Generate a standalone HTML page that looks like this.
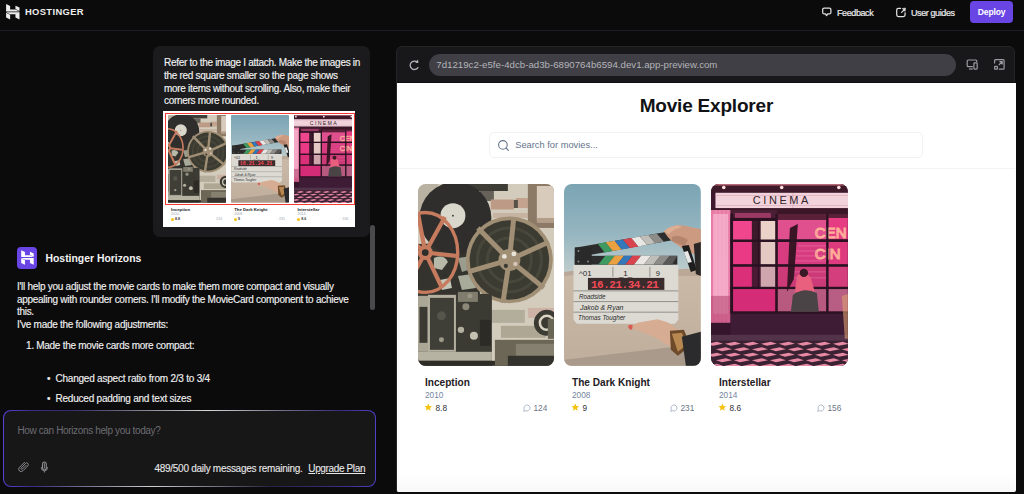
<!DOCTYPE html>
<html><head><meta charset="utf-8">
<style>
*{margin:0;padding:0;box-sizing:border-box}
html,body{width:1024px;height:494px;overflow:hidden;background:#0b0b0c;font-family:"Liberation Sans",sans-serif;position:relative}
.a{position:absolute;white-space:nowrap}
#hdrline{left:0;top:30px;width:1024px;height:1px;background:#1d1c27}
.hdr{color:#ececec;font-size:9px;letter-spacing:-0.4px;line-height:10px;-webkit-text-stroke:0.2px #ececec}
#deploy{left:970px;top:1.2px;width:43.2px;height:21.4px;background:#6a45e6;border-radius:4px;color:#fff;font-weight:700;font-size:8.6px;letter-spacing:-0.2px;text-align:center;line-height:23.2px}
#bubble{left:153.1px;top:45.8px;width:216.6px;height:191.4px;background:#1b1b1d;border-radius:7px}
.btxt{color:#f2f2f2;font-size:10px;letter-spacing:-0.3px;line-height:12.8px;-webkit-text-stroke:0.15px #f2f2f2}
#attach{left:163.4px;top:111.2px;width:191.8px;height:116.3px;background:#fff}
.ctxt{color:#f0f0f0;font-size:10px;letter-spacing:-0.27px;line-height:12.6px;-webkit-text-stroke:0.15px #f0f0f0}
#avatar{left:16.7px;top:247.3px;width:20.6px;height:21.3px;background:#6a45e6;border-radius:4px}
#thumb{left:370px;top:225px;width:5px;height:85px;background:#4a4a4c;border-radius:3px}
#input{left:3.4px;top:409.9px;width:372.2px;height:77.2px;border-radius:8px;background:linear-gradient(90deg,rgba(75,55,176,0) 18%,#d8d8dc 55%,rgba(75,55,176,0) 90%) top/100% 1.2px no-repeat,linear-gradient(90deg,rgba(75,55,176,0) 8%,#d0d0d4 40%,rgba(75,55,176,0) 72%) bottom/100% 1.2px no-repeat,linear-gradient(90deg,#5a40d8 0%,#3a2c88 8%,#25213f 35%,#25213f 70%,#3a2f8a 92%,#5040c8 100%);overflow:hidden}
#input::after{content:"";position:absolute;left:1px;top:1px;right:1px;bottom:1px;border-radius:7px;background:#171718}
#preview{left:396px;top:46.2px;width:619.4px;height:445.8px;background:#18181a;border-radius:6px 6px 2px 2px;border:1px solid #252528;overflow:hidden}
#white{left:396.8px;top:83px;width:619px;height:409px;background:#fff;border-radius:0 0 2px 2px}
#pill{left:429.3px;top:53.8px;width:526.6px;height:22px;background:#3f3f45;border-radius:11px}
.url{color:#b4b4b9;font-size:9.7px;line-height:10px}
.card{position:absolute;top:184.2px;width:136.8px;height:181.8px;border-radius:8px;overflow:hidden}
.card svg{display:block;width:100%;height:100%}
.a svg{display:block}
.ttl{color:#1f2024;font-weight:700;font-size:10.1px;line-height:11px}
.yr{color:#7485a0;font-size:8.3px;line-height:9px}
.rt{color:#303238;font-size:8.3px;line-height:9px;top:404px!important}
.cm{color:#6b7586;font-size:8.3px;line-height:9px;top:404px!important}
.mt{position:absolute;white-space:nowrap;font-size:4.3px;font-weight:700;color:#222;line-height:5px}
.my{position:absolute;white-space:nowrap;font-size:3.6px;color:#9aa3b0;line-height:4px}
.mr{position:absolute;white-space:nowrap;font-size:3.6px;color:#333;line-height:4px;font-weight:700}
.mc{position:absolute;white-space:nowrap;font-size:3.6px;color:#9aa3b0;line-height:4px;transform:translateX(-100%)}
.ms{position:absolute;width:3px;height:3px;background:#f5c211;border-radius:50%}
</style></head><body>

<!-- header -->
<div class="a" id="logo" style="left:0;top:0;width:24px;height:24px">
<svg width="24" height="24" viewBox="0 0 24 24"><g fill="#ececec" transform="translate(6.1,4.1) scale(0.396,0.364)"><path d="M0 20.07 V0 L10.15 5.5 V14.63 L23.57 14.64 L33.85 20.07 Z"/><path d="M23.64 13.67 V4.43 L33.85 9.58 V19.11 Z"/><path d="M23.64 37 V27.87 L10.15 27.86 L0 22.42 H33.85 V42 Z"/><path d="M0 36.8 V23.6 L10.15 29 V42 Z"/></g></svg>
</div>
<div class="a" id="hostinger" style="left:25px;top:6.5px;color:#ededed;font-weight:700;font-size:9.4px;letter-spacing:0.35px;line-height:10px">HOSTINGER</div>
<div class="a" id="hdrline"></div>

<div class="a" id="fbicon" style="left:822px;top:7px;width:10px;height:10px">
<svg width="10" height="10" viewBox="0 0 10 10"><path d="M2.2 1.1 H7.4 Q8.9 1.1 8.9 2.6 V5.4 Q8.9 6.9 7.4 6.9 H5.7 L4.6 8.6 L3.5 6.9 H2.2 Q0.7 6.9 0.7 5.4 V2.6 Q0.7 1.1 2.2 1.1 Z" fill="none" stroke="#e0e0e0" stroke-width="1.25" stroke-linejoin="round"/></svg>
</div>
<div class="a hdr" id="feedback" style="left:837px;top:7.6px">Feedback</div>
<div class="a" id="ugicon" style="left:896px;top:6.5px;width:11px;height:11px">
<svg width="11" height="11" viewBox="0 0 11 11"><path d="M4.6 1.3 H2.4 Q0.7 1.3 0.7 3 V7.8 Q0.7 9.5 2.4 9.5 H7.4 Q9.1 9.5 9.1 7.8 V5.8" fill="none" stroke="#e0e0e0" stroke-width="1.25" stroke-linecap="round"/><path d="M5.6 5.4 L8 3" fill="none" stroke="#e0e0e0" stroke-width="1.1" stroke-linecap="round"/><path d="M9.6 1 L6.2 1.5 L9.1 4.4 Z" fill="#e0e0e0" stroke="#e0e0e0" stroke-width="0.5" stroke-linejoin="round"/></svg>
</div>
<div class="a hdr" id="userguides" style="left:911px;top:7.6px">User guides</div>
<div class="a" id="deploy">Deploy</div>

<!-- chat -->
<div class="a" id="bubble"></div>
<div class="a btxt" id="b1" style="left:164px;top:57px">Refer to the image I attach. Make the images in</div>
<div class="a btxt" id="b2" style="left:164px;top:69.8px">the red square smaller so the page shows</div>
<div class="a btxt" id="b3" style="left:164px;top:82.6px">more items without scrolling. Also, make their</div>
<div class="a btxt" id="b4" style="left:164px;top:95.4px">corners more rounded.</div>
<div class="a" id="attach">
<div style="position:absolute;left:1.4px;top:1.5px;width:189.8px;height:92.3px;border:1.8px solid #f23b2e"></div>
<div style="position:absolute;left:4.8px;top:4px;width:57.8px;height:87.6px;overflow:hidden;border-radius:1px"><svg width="100%" height="100%" style="display:block" viewBox="0 0 137 182" preserveAspectRatio="xMidYMid slice">
<rect width="137" height="182" fill="#d3ccbc"/>
<!-- top left debris -->
<rect x="0" y="0" width="20" height="30" fill="#b9b2a2"/>
<!-- dark cabinet top -->
<rect x="50" y="0" width="40" height="7" fill="#3e3d36"/>
<rect x="62" y="7" width="14" height="10" fill="#66625a"/>
<!-- bricks top -->
<rect x="73" y="15.5" width="23" height="10" fill="#bd9a86"/>
<rect x="98" y="14" width="12" height="10" fill="#c3a28e"/>
<rect x="96" y="16" width="4" height="8" fill="#555048"/>
<rect x="75" y="29" width="35" height="5" fill="#c7b3a2"/>
<!-- wooden frame -->
<rect x="110" y="0" width="27" height="44" fill="#8c7a66"/>
<rect x="119" y="2" width="18" height="34" fill="#d8cbbb"/>
<rect x="119" y="34" width="18" height="5" fill="#b49d88"/>
<!-- dark area mid -->
<path d="M0 60 L60 58 L62 110 L0 112 Z" fill="#34332e"/>
<!-- vinyl -->
<circle cx="37.5" cy="34" r="36" fill="#2f2e2c"/>
<circle cx="35" cy="31.7" r="12.5" fill="#d9d6cc"/>
<circle cx="35" cy="31.7" r="0.9" fill="#333"/>
<!-- debris -->
<path d="M16 74 Q26 70 30 78 L24 86 L16 84 Z" fill="#b6b8a8"/>
<path d="M40 74 L54 72 L56 84 L44 88 Z" fill="#9a9c8e"/>
<path d="M40 92 L54 90 L58 104 L44 106 Z" fill="#a8aa9a"/>
<path d="M22 96 L32 94 L34 104 L24 106 Z" fill="#c3c5b6"/>
<!-- orange reel -->
<g>
<ellipse cx="7.3" cy="68.6" rx="32.5" ry="40" fill="none" stroke="#c67b5e" stroke-width="3.4"/>
<g stroke="#c67b5e" stroke-width="4.2">
<line x1="7.3" y1="68.6" x2="27" y2="33"/><line x1="7.3" y1="68.6" x2="38" y2="72"/><line x1="7.3" y1="68.6" x2="24" y2="104"/><line x1="7.3" y1="68.6" x2="-12" y2="104"/><line x1="7.3" y1="68.6" x2="-20" y2="45"/><line x1="7.3" y1="68.6" x2="0" y2="29"/>
</g>
<circle cx="7.3" cy="68.6" r="7.5" fill="#c67b5e"/>
<circle cx="7.3" cy="68.6" r="3.4" fill="#2e2d29"/>
<circle cx="27" cy="91.8" r="1.3" fill="#2e2d29"/>
</g>
<!-- beige reel -->
<g>
<circle cx="91.5" cy="76" r="43.5" fill="#a08f75"/>
<circle cx="91.5" cy="76" r="39.8" fill="#3c3b31"/>
<circle cx="91.5" cy="76" r="32" fill="none" stroke="#48473b" stroke-width="3"/>
<circle cx="91.5" cy="76" r="22" fill="none" stroke="#48473b" stroke-width="3"/>
<g stroke="#a08f75" stroke-width="5">
<line x1="91.5" y1="76" x2="96" y2="33"/><line x1="91.5" y1="76" x2="131" y2="58"/><line x1="91.5" y1="76" x2="126" y2="104"/><line x1="91.5" y1="76" x2="85" y2="119"/><line x1="91.5" y1="76" x2="50" y2="88"/><line x1="91.5" y1="76" x2="60" y2="44"/>
</g>
<circle cx="91.5" cy="76" r="11" fill="#a08f75"/>
<circle cx="86.5" cy="72.5" r="2.4" fill="#e8e4da"/><circle cx="96" cy="70" r="2.4" fill="#e8e4da"/><circle cx="97.5" cy="80" r="2.2" fill="#d9c2b8"/><circle cx="88" cy="82" r="2.1" fill="#3c3b31"/>
</g>
<!-- lower wall bricks -->
<rect x="66" y="126" width="41" height="13" fill="#b3ad9c"/>
<rect x="83" y="142" width="45" height="12" fill="#aea794"/>
<rect x="110" y="124" width="27" height="10" fill="#cdb3a5"/>
<!-- small reel right -->
<circle cx="129" cy="139" r="13" fill="#3b3a33"/>
<circle cx="129" cy="139" r="7" fill="none" stroke="#d8d3c3" stroke-width="2.5"/>
<rect x="130" y="135" width="7" height="20" fill="#6a6656"/>
<!-- projector -->
<rect x="0" y="110" width="74" height="72" fill="#3b3a33"/>
<rect x="0" y="112" width="12" height="56" fill="#aaa796"/>
<rect x="1.5" y="123" width="8" height="36" fill="#3a3a32"/>
<rect x="10" y="111" width="28" height="57" fill="#b4b0a0"/>
<rect x="12" y="114" width="24" height="52" fill="#3f3e37"/>
<circle cx="23.5" cy="132" r="4.5" fill="#56554c"/>
<circle cx="23.5" cy="156" r="2.5" fill="#9e9a8a"/>
<rect x="40" y="108" width="20" height="10" fill="#807d6e"/>
<circle cx="52" cy="112" r="2.5" fill="#9a9686"/>
<circle cx="48" cy="123" r="3.5" fill="#8c897a"/>
<circle cx="43" cy="146" r="3.2" fill="#b5b1a2"/>
<circle cx="56" cy="152" r="4" fill="#c4c0b2"/>
<rect x="62" y="136" width="11" height="26" fill="#2c2b26"/>
<rect x="0" y="168" width="74" height="9" fill="#b6b3a3"/>
<rect x="0" y="177" width="137" height="5" fill="#2d2c27"/>
<!-- bottom right machine -->
<rect x="77" y="156" width="60" height="26" fill="#6b6656"/>
<rect x="98" y="160" width="39" height="12" fill="#858070"/>
<rect x="90" y="172" width="47" height="10" fill="#34322c"/>
</svg></div>
<div style="position:absolute;left:67.9px;top:4px;width:57.6px;height:87.6px;overflow:hidden;border-radius:1px"><svg width="100%" height="100%" style="display:block" viewBox="0 0 137 182" preserveAspectRatio="xMidYMid slice">
<defs>
<linearGradient id="sky" x1="0" y1="0" x2="0" y2="1"><stop offset="0" stop-color="#7ba4b3"/><stop offset="0.55" stop-color="#96b6c1"/><stop offset="1" stop-color="#c3cfcd"/></linearGradient>
<linearGradient id="gnd" x1="0" y1="0" x2="0" y2="1"><stop offset="0" stop-color="#c9b9a6"/><stop offset="1" stop-color="#bfae9c"/></linearGradient>
</defs>
<rect width="137" height="92" fill="url(#sky)"/>
<rect y="88" width="137" height="94" fill="url(#gnd)"/>
<path d="M0 88 Q20 84 40 89 L0 92 Z" fill="#b9a89a"/>
<path d="M100 88 Q120 83 137 86 V92 H100 Z" fill="#bba896"/>
<!-- shadow -->
<path d="M0 176 L137 160 V182 H0 Z" fill="#a99a8b"/>
<!-- top stick -->
<path d="M11 70.8 L11 63.7 L115 45.9 L118 54.5 L28.6 70.7 Z" fill="#2e2d2d"/>
<path d="M33.8 59.8 L41.8 58.4 L48.8 67.1 L40.8 68.5 Z" fill="#3f9a62"/>
<path d="M41.8 58.4 L50.8 56.9 L57.8 65.5 L48.8 67.1 Z" fill="#eba141"/>
<path d="M50.8 56.9 L59.0 55.5 L66.0 64.0 L57.8 65.5 Z" fill="#3378ba"/>
<path d="M59.0 55.5 L67.5 54.0 L74.5 62.5 L66.0 64.0 Z" fill="#d9434d"/>
<path d="M67.5 54.0 L76.0 52.6 L83.0 60.9 L74.5 62.5 Z" fill="#e9e7e3"/>
<path d="M76.0 52.6 L84.5 51.1 L91.5 59.4 L83.0 60.9 Z" fill="#c0beb9"/>
<path d="M84.5 51.1 L93.0 49.7 L100.0 57.9 L91.5 59.4 Z" fill="#8d8c88"/>
<!-- bottom stick -->
<rect x="10.8" y="71.9" width="102.7" height="8.8" fill="#2e2d2d"/>
<path d="M34.4 80.7 L41.4 71.9 L50.8 71.9 L43.8 80.7 Z" fill="#3f9a62"/>
<path d="M43.8 80.7 L50.8 71.9 L60.2 71.9 L53.2 80.7 Z" fill="#eba141"/>
<path d="M53.2 80.7 L60.2 71.9 L68.4 71.9 L61.4 80.7 Z" fill="#3378ba"/>
<path d="M61.4 80.7 L68.4 71.9 L77.2 71.9 L70.2 80.7 Z" fill="#d9434d"/>
<path d="M70.2 80.7 L77.2 71.9 L87.1 71.9 L80.1 80.7 Z" fill="#e9e7e3"/>
<path d="M80.1 80.7 L87.1 71.9 L96.5 71.9 L89.5 80.7 Z" fill="#c0beb9"/>
<path d="M89.5 80.7 L96.5 71.9 L105.9 71.9 L98.9 80.7 Z" fill="#8d8c88"/>
<path d="M98.9 80.7 L105.9 71.9 L113.5 71.9 L108.3 80.7 Z" fill="#5a5957"/>
<rect x="10.8" y="63.5" width="17" height="17.2" fill="#2b2a2a"/>
<circle cx="14.5" cy="67" r="1" fill="#888"/><circle cx="14.5" cy="77.5" r="1" fill="#888"/><circle cx="24" cy="77.5" r="1" fill="#888"/>
<!-- board -->
<path d="M9.5 81.2 H114.5 V136 L111 140 H13 L9.5 136 Z" fill="#dcdad3"/>
<g fill="none" stroke="#7f7d78" stroke-width="0.8">
<line x1="9.5" y1="107" x2="114.5" y2="107"/><line x1="9.5" y1="117.7" x2="114.5" y2="117.7"/><line x1="9.5" y1="128.3" x2="114.5" y2="128.3"/>
<line x1="49" y1="83" x2="49" y2="93"/><line x1="86" y1="83" x2="86" y2="93"/>
</g>
<g font-family="Liberation Sans" font-size="6.5" fill="#2a2a2a">
<text x="15" y="92" font-size="8">^01</text><text x="55" y="92" font-size="8">_1_</text><text x="92" y="92" font-size="7.5">9</text>
<text x="15" y="115" font-size="6.3" font-style="italic">Roadside</text>
<text x="16" y="126" font-size="7" font-style="italic">Jakob &amp; Ryan</text>
<text x="14" y="136.5" font-size="6.3" font-style="italic">Thomas   Tougher</text>
</g>
<rect x="24" y="94" width="76.5" height="12" fill="#3a2c2c"/>
<text x="27" y="104.5" font-family="Liberation Mono" font-size="11" font-weight="700" fill="#f24a58" letter-spacing="-0.45">16.21.34.21</text>
<!-- upper hand -->
<path d="M100 47.5 Q104 43 112 41.5 Q120 40.5 126 43 L137 45 V72 L130 70 Q122 68 118 64 L112 60 Q107 57 104 53 Z" fill="#cc9a80"/>
<path d="M100 47.5 Q104 43 112 41.5 Q116 41 118 43 Q110 45 105 50 Z" fill="#dcae94"/>
<path d="M108 53 Q116 50 124 56 L121 62 Q114 60 108 57 Z" fill="#b5846c"/>
<path d="M118 62 L125 61 L133 86 L127 88 Z" fill="#1f1e1e"/>
<path d="M120 68 L124 67 L128 78 L124 79 Z" fill="#e8e8e8"/>
<path d="M130 60 L137 58 V92 L132 90 Z" fill="#2a2726"/>
<!-- lower hand -->
<path d="M65.3 142.8 L74.8 138.7 L93.6 135.3 L104.4 138.7 L115.2 146.8 L120.6 153.5 L115.2 164.3 L104.4 161.6 L90.9 153.5 L74.8 146.8 Z" fill="#d6ad93"/>
<path d="M64.5 141.5 Q67 140 69 142 L68 146 Q65 146 64.5 144 Z" fill="#d85a50"/>
<path d="M106 147 L120 146 L127 162 L114 172 L107 166 Z" fill="#6d4a2a"/>
<path d="M108 150 L118 149 L123 161 L114 168 Z" fill="#b78852"/>
<path d="M118 153 L137 148 V182 H122 Z" fill="#2b2a2c"/>
</svg></div>
<div style="position:absolute;left:131px;top:4px;width:57.4px;height:87.6px;overflow:hidden;border-radius:1px"><svg width="100%" height="100%" style="display:block" viewBox="0 0 137 182" preserveAspectRatio="xMidYMid slice">
<rect width="137" height="182" fill="#40192f"/>
<!-- top bar -->
<rect width="137" height="9" fill="#3e1a2a"/>
<rect width="137" height="1.5" fill="#b86a78"/>
<circle cx="12.8" cy="3.5" r="1.8" fill="#ffe0e0"/><circle cx="70.8" cy="3.5" r="1.8" fill="#ffe0e0"/><circle cx="128" cy="3.5" r="1.8" fill="#ffe0e0"/>
<!-- marquee -->
<rect x="4.5" y="8.8" width="133" height="15.5" fill="#f2d3dc"/>
<g stroke="#dcaab8" stroke-width="0.7"><line x1="4.5" y1="11.5" x2="137" y2="11.5"/><line x1="4.5" y1="21.5" x2="137" y2="21.5"/></g>
<line x1="82" y1="8.8" x2="82" y2="24.3" stroke="#c89aa8" stroke-width="0.5"/>
<text x="71" y="20.3" text-anchor="middle" font-family="Liberation Sans" font-size="11" letter-spacing="2.6" fill="#33242c">CINEMA</text>
<rect x="0" y="24.3" width="137" height="6" fill="#3a1626"/>
<!-- left tiled wall -->
<rect x="0" y="26" width="19.5" height="113" fill="#e87aa6"/>
<rect x="2" y="30" width="15" height="100" fill="#f4a6c4"/>
<g stroke="#fbd0de" stroke-width="0.35" opacity="0.9">
<line x1="5" y1="26" x2="5" y2="139"/><line x1="9" y1="26" x2="9" y2="139"/><line x1="13" y1="26" x2="13" y2="139"/><line x1="17" y1="26" x2="17" y2="139"/>
</g>
<rect x="0" y="112" width="19.5" height="27" fill="#b84a74" opacity="0.6"/>
<!-- overhang -->
<path d="M19.5 26 H66 V37 H26 Z" fill="#4a1f35"/>
<rect x="24" y="29" width="36" height="5" fill="#9a3a62"/>
<!-- window area -->
<rect x="19.5" y="34" width="117.5" height="95" fill="#2a1020"/>
<rect x="21.5" y="37" width="19.5" height="19" fill="#f0468e"/>
<rect x="49.5" y="37" width="15" height="19" fill="#ead2c8"/><rect x="41" y="37" width="8.5" height="19" fill="#3c1a2c"/>
<rect x="21.5" y="58" width="19.5" height="22.5" fill="#ea3a86"/>
<rect x="49.5" y="58" width="15" height="22.5" fill="#e4c9c2"/><rect x="41" y="58" width="8.5" height="22.5" fill="#3c1a2c"/>
<rect x="21.5" y="82.5" width="19.5" height="20.5" fill="#dc2f7a"/>
<rect x="49.5" y="82.5" width="15" height="20.5" fill="#cfa6ae"/><rect x="41" y="82.5" width="8.5" height="20.5" fill="#4a1a34"/>
<rect x="21.5" y="105" width="43" height="23" fill="#d42c76"/>
<rect x="66.5" y="34" width="49" height="21.5" fill="#e0508e"/>
<rect x="66.5" y="30" width="70.5" height="6" fill="#5a2038"/>
<rect x="66.5" y="58" width="49" height="22.5" fill="#d83c80"/>
<rect x="66.5" y="82.5" width="49" height="20.5" fill="#cc3a78"/>
<rect x="66.5" y="105" width="49" height="23" fill="#b85a80"/>
<rect x="117.5" y="34" width="19.5" height="21.5" fill="#e63c82"/>
<rect x="117.5" y="58" width="19.5" height="22.5" fill="#de3a7e"/>
<rect x="117.5" y="82.5" width="19.5" height="20.5" fill="#d43e7c"/>
<rect x="117.5" y="105" width="19.5" height="23" fill="#b85e84"/>
<!-- stairs -->
<path d="M79 44 L87 40 L83 95 L76 108 Z" fill="#3a1525"/>
<g stroke="#ff9ab8" stroke-width="0.6" opacity="0.6"><line x1="87" y1="62" x2="115" y2="62"/><line x1="86" y1="67" x2="115" y2="67"/><line x1="85" y1="72" x2="115" y2="72"/><line x1="84" y1="77" x2="115" y2="77"/><line x1="84" y1="88" x2="115" y2="88"/><line x1="83" y1="94" x2="115" y2="94"/></g>
<!-- neon -->
<text x="104" y="54" font-family="Liberation Sans" font-size="15" fill="none" stroke="#ffb09a" stroke-width="1.1">CEN</text>
<text x="104" y="75" font-family="Liberation Sans" font-size="15" fill="none" stroke="#ffb09a" stroke-width="1.1">CIN</text>
<!-- mullions -->
<g fill="#2a1222">
<rect x="19.5" y="30" width="2.6" height="100"/>
<rect x="47" y="34" width="1.2" height="70"/>
<rect x="64.6" y="30" width="2.2" height="100"/>
<rect x="115.5" y="30" width="2" height="100"/>
<rect x="19.5" y="55.6" width="117.5" height="2.2"/>
<rect x="19.5" y="80.5" width="117.5" height="2.2"/>
<rect x="19.5" y="103" width="117.5" height="2.2"/>
<rect x="19.5" y="127.5" width="117.5" height="2.5"/>
</g>
<!-- person -->
<path d="M86 92 Q94 86 100 94 L104 108 L84 108 Z" fill="#e8607e"/>
<circle cx="93" cy="89" r="4.2" fill="#3a1a24"/>
<path d="M82 111 Q93 103 106 109 L108 128 H80 Z" fill="#4a4446"/>
<!-- lower wall -->
<rect x="19.5" y="130" width="117.5" height="22" fill="#3f1c36"/>
<rect x="0" y="139" width="19.5" height="13" fill="#35152c"/>
<rect x="0" y="151" width="137" height="6" fill="#53334a"/>
<!-- floor -->
<rect x="0" y="157" width="137" height="25" fill="#3a2232"/>
<g fill="#e889a5">
<path d="M-4 160 L6 158 L12 160 L2 162 Z"/><path d="M14 160 L24 158 L30 160 L20 162 Z"/><path d="M32 160 L42 158 L48 160 L38 162 Z"/><path d="M50 160 L60 158 L66 160 L56 162 Z"/><path d="M68 160 L78 158 L84 160 L74 162 Z"/><path d="M86 160 L96 158 L102 160 L92 162 Z"/><path d="M104 160 L114 158 L120 160 L110 162 Z"/><path d="M122 160 L132 158 L138 160 L128 162 Z"/>
<path d="M5 165.5 L15 163.5 L21 165.5 L11 167.5 Z"/><path d="M23 165.5 L33 163.5 L39 165.5 L29 167.5 Z"/><path d="M41 165.5 L51 163.5 L57 165.5 L47 167.5 Z"/><path d="M59 165.5 L69 163.5 L75 165.5 L65 167.5 Z"/><path d="M77 165.5 L87 163.5 L93 165.5 L83 167.5 Z"/><path d="M95 165.5 L105 163.5 L111 165.5 L101 167.5 Z"/><path d="M113 165.5 L123 163.5 L129 165.5 L119 167.5 Z"/><path d="M131 165.5 L141 163.5 L147 165.5 L137 167.5 Z"/>
<path d="M-4 171 L6 169 L12 171 L2 173 Z"/><path d="M14 171 L24 169 L30 171 L20 173 Z"/><path d="M32 171 L42 169 L48 171 L38 173 Z"/><path d="M50 171 L60 169 L66 171 L56 173 Z"/><path d="M68 171 L78 169 L84 171 L74 173 Z"/><path d="M86 171 L96 169 L102 171 L92 173 Z"/><path d="M104 171 L114 169 L120 171 L110 173 Z"/><path d="M122 171 L132 169 L138 171 L128 173 Z"/>
<path d="M5 176.5 L15 174.5 L21 176.5 L11 178.5 Z"/><path d="M23 176.5 L33 174.5 L39 176.5 L29 178.5 Z"/><path d="M41 176.5 L51 174.5 L57 176.5 L47 178.5 Z"/><path d="M59 176.5 L69 174.5 L75 176.5 L65 178.5 Z"/><path d="M77 176.5 L87 174.5 L93 176.5 L83 178.5 Z"/><path d="M95 176.5 L105 174.5 L111 176.5 L101 178.5 Z"/><path d="M113 176.5 L123 174.5 L129 176.5 L119 178.5 Z"/><path d="M131 176.5 L141 174.5 L147 176.5 L137 178.5 Z"/>
<path d="M-4 182 L6 180 L12 182 L2 184 Z"/><path d="M14 182 L24 180 L30 182 L20 184 Z"/><path d="M32 182 L42 180 L48 182 L38 184 Z"/><path d="M50 182 L60 180 L66 182 L56 184 Z"/><path d="M68 182 L78 180 L84 182 L74 184 Z"/><path d="M86 182 L96 180 L102 182 L92 184 Z"/><path d="M104 182 L114 180 L120 182 L110 184 Z"/><path d="M122 182 L132 180 L138 182 L128 184 Z"/>
</g>
<!-- right chair -->
<path d="M131 112 L137 110 V155 L134 155 Z" fill="#d9a070" opacity="0.6"/>
</svg></div>
<div class="mt" style="left:7.6px;top:95.5px">Inception</div>
<div class="my" style="left:7.6px;top:100.5px">2010</div>
<div class="ms" style="left:7.6px;top:106.5px"></div><div class="mr" style="left:11.5px;top:106px">8.8</div><div class="mc" style="left:58.5px;top:106px">◌ 124</div>
<div class="mt" style="left:70.8px;top:95.5px">The Dark Knight</div>
<div class="my" style="left:70.8px;top:100.5px">2008</div>
<div class="ms" style="left:70.8px;top:106.5px"></div><div class="mr" style="left:74.7px;top:106px">9</div><div class="mc" style="left:121.7px;top:106px">◌ 231</div>
<div class="mt" style="left:134px;top:95.5px">Interstellar</div>
<div class="my" style="left:134px;top:100.5px">2014</div>
<div class="ms" style="left:134px;top:106.5px"></div><div class="mr" style="left:137.9px;top:106px">8.6</div><div class="mc" style="left:184.9px;top:106px;transform:translateX(-100%)">◌ 156</div>
</div>

<div class="a" id="avatar"><svg width="21" height="21" viewBox="0 0 21 21" style="position:absolute;left:0;top:0"><g fill="#fff" transform="translate(4.2,3.2) scale(0.37,0.345)"><path d="M0 20.07 V0 L10.15 5.5 V14.63 L23.57 14.64 L33.85 20.07 Z"/><path d="M23.64 13.67 V4.43 L33.85 9.58 V19.11 Z"/><path d="M23.64 37 V27.87 L10.15 27.86 L0 22.42 H33.85 V42 Z"/><path d="M0 36.8 V23.6 L10.15 29 V42 Z"/></g></svg></div>
<div class="a" id="hname" style="left:45.5px;top:253px;color:#f2f2f2;font-weight:700;font-size:10.4px;line-height:11px">Hostinger Horizons</div>
<div class="a ctxt" id="c1" style="left:16.9px;top:280.5px">I'll help you adjust the movie cards to make them more compact and visually</div>
<div class="a ctxt" id="c2" style="left:16.9px;top:293.5px">appealing with rounder corners. I'll modify the MovieCard component to achieve</div>
<div class="a ctxt" id="c3" style="left:16.9px;top:305.7px">this.</div>
<div class="a ctxt" id="c4" style="left:16.9px;top:318.8px">I've made the following adjustments:</div>
<div class="a ctxt" id="c5" style="left:26.1px;top:339.7px">1.</div>
<div class="a ctxt" id="c6" style="left:36.2px;top:339.7px">Made the movie cards more compact:</div>
<div class="a ctxt" id="c7" style="left:47px;top:372.5px">•</div>
<div class="a ctxt" id="c8" style="left:55.5px;top:372.5px;font-size:10px;letter-spacing:-0.22px">Changed aspect ratio from 2/3 to 3/4</div>
<div class="a ctxt" id="c9" style="left:47px;top:392.9px">•</div>
<div class="a ctxt" id="c10" style="left:55.5px;top:392.9px;font-size:10px;letter-spacing:-0.22px">Reduced padding and text sizes</div>
<div class="a" id="thumb"></div>

<div class="a" id="input"></div>
<div class="a" id="ph" style="left:17.4px;top:426px;color:#6c6c72;font-size:10px;letter-spacing:-0.36px;line-height:10px">How can Horizons help you today?</div>
<div class="a" id="rem" style="left:154.5px;top:463.5px;color:#e8e8e8;font-size:10px;letter-spacing:-0.28px;line-height:10px;-webkit-text-stroke:0.1px #e8e8e8">489/500 daily messages remaining.</div>
<div class="a" id="upg" style="left:308.3px;top:463.5px;color:#e8e8e8;font-size:10px;letter-spacing:-0.36px;line-height:10px;text-decoration:underline;-webkit-text-stroke:0.1px #e8e8e8">Upgrade Plan</div>

<!-- preview -->
<div class="a" id="preview"></div>
<div class="a" id="pill"></div>
<div class="a url" id="url" style="left:436.3px;top:60px">7d1219c2-e5fe-4dcb-ad3b-6890764b6594.dev1.app-preview.com</div>
<div class="a" id="tbline" style="left:396.5px;top:81.5px;width:618.5px;height:1.5px;background:#0f0f11"></div>
<div class="a" id="white"></div>

<div class="a" id="reload" style="left:402px;top:54px;width:26px;height:22px"><svg width="26" height="22" viewBox="0 0 26 22"><path d="M15.2 8.2 A4.2 4.2 0 1 0 15.9 13.6" fill="none" stroke="#b4b4b9" stroke-width="1.3" stroke-linecap="round"/><path d="M13.2 8.6 L16.4 8.9 L16 5.6 Z" fill="#b4b4b9"/></svg></div>
<div class="a" id="devices" style="left:960px;top:52px;width:26px;height:22px"><svg width="26" height="22" viewBox="0 0 26 22"><path d="M12.8 14.7 H8.2 Q7.2 14.7 7.2 13.7 V9 Q7.2 8 8.2 8 H15.8 Q16.8 8 16.8 9 V10" fill="none" stroke="#9c9ca2" stroke-width="1.2"/><path d="M9 17 H12.8" stroke="#9c9ca2" stroke-width="1.2"/><rect x="13.9" y="10.9" width="3.3" height="6.2" rx="0.8" fill="none" stroke="#9c9ca2" stroke-width="1.2"/></svg></div>
<div class="a" id="expand" style="left:988px;top:52px;width:24px;height:22px"><svg width="24" height="22" viewBox="0 0 24 22"><path d="M6.6 11.5 V8.5 Q6.6 7.6 7.5 7.6 H15.2 Q16.1 7.6 16.1 8.5 V16.3 Q16.1 17.2 15.2 17.2 H10.8" fill="none" stroke="#9c9ca2" stroke-width="1.2"/><rect x="6.6" y="14.4" width="2.8" height="2.8" rx="0.5" fill="none" stroke="#9c9ca2" stroke-width="1.2"/><path d="M10.8 13 L14 9.8 M11.4 9.6 H14.2 V12.4" fill="none" stroke="#9c9ca2" stroke-width="1.2"/></svg></div>
<div class="a" id="sicon" style="left:490px;top:134px;width:30px;height:22px"><svg width="30" height="22" viewBox="0 0 30 22"><circle cx="12.9" cy="10.9" r="4.3" fill="none" stroke="#64748b" stroke-width="1.1"/><path d="M16 14 L18.4 16.4" stroke="#64748b" stroke-width="1.1" stroke-linecap="round"/></svg></div>
<div class="a" id="clip" style="left:14px;top:456px;width:40px;height:22px"><svg width="40" height="22" viewBox="0 0 40 22"><path transform="translate(4.1,5.5) scale(0.82) translate(-4.7,-5.1)" d="M12.6 6 L6.4 12.2 Q4.2 14.6 6.3 16.6 Q8.5 18.6 10.9 16.2 L16.4 10.6 Q18 8.8 16.6 7.4 Q15.2 6 13.5 7.7 L8.6 12.8 Q7.8 13.8 8.5 14.4 Q9.2 15 10.1 14.1 L14.4 9.8" fill="none" stroke="#8c8c91" stroke-width="1.2" stroke-linecap="round"/><path d="M30.4 6 Q32.3 6 32.3 8.6 V11.5 Q32.3 14 30.4 14 Q28.5 14 28.5 11.5 V8.6 Q28.5 6 30.4 6 Z" fill="none" stroke="#8c8c91" stroke-width="1.1"/><path d="M30.4 7.2 V12.5" stroke="#8c8c91" stroke-width="0.9"/><path d="M27.2 11 Q27.4 15 30.4 15 Q33.4 15 33.6 11" fill="none" stroke="#8c8c91" stroke-width="0.9"/><path d="M30.4 15 V16.5" stroke="#8c8c91" stroke-width="1"/></svg></div>

<div class="a" id="wfade" style="left:396.8px;top:474px;width:618.7px;height:18px;background:linear-gradient(rgba(248,248,248,0),#f7f7f7);border-radius:0 0 2px 2px"></div>
<div class="a" id="mtitle" style="left:639.7px;top:96px;color:#111216;font-weight:700;font-size:19px;letter-spacing:-0.2px;line-height:20px">Movie Explorer</div>
<div class="a" id="search" style="left:488.8px;top:132px;width:434px;height:26px;border:1px solid #f1f2f5;border-radius:5px"></div>
<div class="a" id="stxt" style="left:515.2px;top:140px;color:#64748b;font-size:9.3px;line-height:10px">Search for movies...</div>
<div class="a" id="divider" style="left:397px;top:168px;width:618px;height:1px;background:#f3f4f6"></div>

<div class="card" id="card1" style="left:417.6px"><svg viewBox="0 0 137 182" preserveAspectRatio="xMidYMid slice">
<rect width="137" height="182" fill="#d3ccbc"/>
<!-- top left debris -->
<rect x="0" y="0" width="20" height="30" fill="#b9b2a2"/>
<!-- dark cabinet top -->
<rect x="50" y="0" width="40" height="7" fill="#3e3d36"/>
<rect x="62" y="7" width="14" height="10" fill="#66625a"/>
<!-- bricks top -->
<rect x="73" y="15.5" width="23" height="10" fill="#bd9a86"/>
<rect x="98" y="14" width="12" height="10" fill="#c3a28e"/>
<rect x="96" y="16" width="4" height="8" fill="#555048"/>
<rect x="75" y="29" width="35" height="5" fill="#c7b3a2"/>
<!-- wooden frame -->
<rect x="110" y="0" width="27" height="44" fill="#8c7a66"/>
<rect x="119" y="2" width="18" height="34" fill="#d8cbbb"/>
<rect x="119" y="34" width="18" height="5" fill="#b49d88"/>
<!-- dark area mid -->
<path d="M0 60 L60 58 L62 110 L0 112 Z" fill="#34332e"/>
<!-- vinyl -->
<circle cx="37.5" cy="34" r="36" fill="#2f2e2c"/>
<circle cx="35" cy="31.7" r="12.5" fill="#d9d6cc"/>
<circle cx="35" cy="31.7" r="0.9" fill="#333"/>
<!-- debris -->
<path d="M16 74 Q26 70 30 78 L24 86 L16 84 Z" fill="#b6b8a8"/>
<path d="M40 74 L54 72 L56 84 L44 88 Z" fill="#9a9c8e"/>
<path d="M40 92 L54 90 L58 104 L44 106 Z" fill="#a8aa9a"/>
<path d="M22 96 L32 94 L34 104 L24 106 Z" fill="#c3c5b6"/>
<!-- orange reel -->
<g>
<ellipse cx="7.3" cy="68.6" rx="32.5" ry="40" fill="none" stroke="#c67b5e" stroke-width="3.4"/>
<g stroke="#c67b5e" stroke-width="4.2">
<line x1="7.3" y1="68.6" x2="27" y2="33"/><line x1="7.3" y1="68.6" x2="38" y2="72"/><line x1="7.3" y1="68.6" x2="24" y2="104"/><line x1="7.3" y1="68.6" x2="-12" y2="104"/><line x1="7.3" y1="68.6" x2="-20" y2="45"/><line x1="7.3" y1="68.6" x2="0" y2="29"/>
</g>
<circle cx="7.3" cy="68.6" r="7.5" fill="#c67b5e"/>
<circle cx="7.3" cy="68.6" r="3.4" fill="#2e2d29"/>
<circle cx="27" cy="91.8" r="1.3" fill="#2e2d29"/>
</g>
<!-- beige reel -->
<g>
<circle cx="91.5" cy="76" r="43.5" fill="#a08f75"/>
<circle cx="91.5" cy="76" r="39.8" fill="#3c3b31"/>
<circle cx="91.5" cy="76" r="32" fill="none" stroke="#48473b" stroke-width="3"/>
<circle cx="91.5" cy="76" r="22" fill="none" stroke="#48473b" stroke-width="3"/>
<g stroke="#a08f75" stroke-width="5">
<line x1="91.5" y1="76" x2="96" y2="33"/><line x1="91.5" y1="76" x2="131" y2="58"/><line x1="91.5" y1="76" x2="126" y2="104"/><line x1="91.5" y1="76" x2="85" y2="119"/><line x1="91.5" y1="76" x2="50" y2="88"/><line x1="91.5" y1="76" x2="60" y2="44"/>
</g>
<circle cx="91.5" cy="76" r="11" fill="#a08f75"/>
<circle cx="86.5" cy="72.5" r="2.4" fill="#e8e4da"/><circle cx="96" cy="70" r="2.4" fill="#e8e4da"/><circle cx="97.5" cy="80" r="2.2" fill="#d9c2b8"/><circle cx="88" cy="82" r="2.1" fill="#3c3b31"/>
</g>
<!-- lower wall bricks -->
<rect x="66" y="126" width="41" height="13" fill="#b3ad9c"/>
<rect x="83" y="142" width="45" height="12" fill="#aea794"/>
<rect x="110" y="124" width="27" height="10" fill="#cdb3a5"/>
<!-- small reel right -->
<circle cx="129" cy="139" r="13" fill="#3b3a33"/>
<circle cx="129" cy="139" r="7" fill="none" stroke="#d8d3c3" stroke-width="2.5"/>
<rect x="130" y="135" width="7" height="20" fill="#6a6656"/>
<!-- projector -->
<rect x="0" y="110" width="74" height="72" fill="#3b3a33"/>
<rect x="0" y="112" width="12" height="56" fill="#aaa796"/>
<rect x="1.5" y="123" width="8" height="36" fill="#3a3a32"/>
<rect x="10" y="111" width="28" height="57" fill="#b4b0a0"/>
<rect x="12" y="114" width="24" height="52" fill="#3f3e37"/>
<circle cx="23.5" cy="132" r="4.5" fill="#56554c"/>
<circle cx="23.5" cy="156" r="2.5" fill="#9e9a8a"/>
<rect x="40" y="108" width="20" height="10" fill="#807d6e"/>
<circle cx="52" cy="112" r="2.5" fill="#9a9686"/>
<circle cx="48" cy="123" r="3.5" fill="#8c897a"/>
<circle cx="43" cy="146" r="3.2" fill="#b5b1a2"/>
<circle cx="56" cy="152" r="4" fill="#c4c0b2"/>
<rect x="62" y="136" width="11" height="26" fill="#2c2b26"/>
<rect x="0" y="168" width="74" height="9" fill="#b6b3a3"/>
<rect x="0" y="177" width="137" height="5" fill="#2d2c27"/>
<!-- bottom right machine -->
<rect x="77" y="156" width="60" height="26" fill="#6b6656"/>
<rect x="98" y="160" width="39" height="12" fill="#858070"/>
<rect x="90" y="172" width="47" height="10" fill="#34322c"/>
</svg></div>
<div class="card" id="card2" style="left:564px"><svg viewBox="0 0 137 182" preserveAspectRatio="xMidYMid slice">
<defs>
<linearGradient id="sky1" x1="0" y1="0" x2="0" y2="1"><stop offset="0" stop-color="#7ba4b3"/><stop offset="0.55" stop-color="#96b6c1"/><stop offset="1" stop-color="#c3cfcd"/></linearGradient>
<linearGradient id="gnd1" x1="0" y1="0" x2="0" y2="1"><stop offset="0" stop-color="#c9b9a6"/><stop offset="1" stop-color="#bfae9c"/></linearGradient>
</defs>
<rect width="137" height="92" fill="url(#sky1)"/>
<rect y="88" width="137" height="94" fill="url(#gnd1)"/>
<path d="M0 88 Q20 84 40 89 L0 92 Z" fill="#b9a89a"/>
<path d="M100 88 Q120 83 137 86 V92 H100 Z" fill="#bba896"/>
<!-- shadow -->
<path d="M0 176 L137 160 V182 H0 Z" fill="#a99a8b"/>
<!-- top stick -->
<path d="M11 70.8 L11 63.7 L115 45.9 L118 54.5 L28.6 70.7 Z" fill="#2e2d2d"/>
<path d="M33.8 59.8 L41.8 58.4 L48.8 67.1 L40.8 68.5 Z" fill="#3f9a62"/>
<path d="M41.8 58.4 L50.8 56.9 L57.8 65.5 L48.8 67.1 Z" fill="#eba141"/>
<path d="M50.8 56.9 L59.0 55.5 L66.0 64.0 L57.8 65.5 Z" fill="#3378ba"/>
<path d="M59.0 55.5 L67.5 54.0 L74.5 62.5 L66.0 64.0 Z" fill="#d9434d"/>
<path d="M67.5 54.0 L76.0 52.6 L83.0 60.9 L74.5 62.5 Z" fill="#e9e7e3"/>
<path d="M76.0 52.6 L84.5 51.1 L91.5 59.4 L83.0 60.9 Z" fill="#c0beb9"/>
<path d="M84.5 51.1 L93.0 49.7 L100.0 57.9 L91.5 59.4 Z" fill="#8d8c88"/>
<!-- bottom stick -->
<rect x="10.8" y="71.9" width="102.7" height="8.8" fill="#2e2d2d"/>
<path d="M34.4 80.7 L41.4 71.9 L50.8 71.9 L43.8 80.7 Z" fill="#3f9a62"/>
<path d="M43.8 80.7 L50.8 71.9 L60.2 71.9 L53.2 80.7 Z" fill="#eba141"/>
<path d="M53.2 80.7 L60.2 71.9 L68.4 71.9 L61.4 80.7 Z" fill="#3378ba"/>
<path d="M61.4 80.7 L68.4 71.9 L77.2 71.9 L70.2 80.7 Z" fill="#d9434d"/>
<path d="M70.2 80.7 L77.2 71.9 L87.1 71.9 L80.1 80.7 Z" fill="#e9e7e3"/>
<path d="M80.1 80.7 L87.1 71.9 L96.5 71.9 L89.5 80.7 Z" fill="#c0beb9"/>
<path d="M89.5 80.7 L96.5 71.9 L105.9 71.9 L98.9 80.7 Z" fill="#8d8c88"/>
<path d="M98.9 80.7 L105.9 71.9 L113.5 71.9 L108.3 80.7 Z" fill="#5a5957"/>
<rect x="10.8" y="63.5" width="17" height="17.2" fill="#2b2a2a"/>
<circle cx="14.5" cy="67" r="1" fill="#888"/><circle cx="14.5" cy="77.5" r="1" fill="#888"/><circle cx="24" cy="77.5" r="1" fill="#888"/>
<!-- board -->
<path d="M9.5 81.2 H114.5 V136 L111 140 H13 L9.5 136 Z" fill="#dcdad3"/>
<g fill="none" stroke="#7f7d78" stroke-width="0.8">
<line x1="9.5" y1="107" x2="114.5" y2="107"/><line x1="9.5" y1="117.7" x2="114.5" y2="117.7"/><line x1="9.5" y1="128.3" x2="114.5" y2="128.3"/>
<line x1="49" y1="83" x2="49" y2="93"/><line x1="86" y1="83" x2="86" y2="93"/>
</g>
<g font-family="Liberation Sans" font-size="6.5" fill="#2a2a2a">
<text x="15" y="92" font-size="8">^01</text><text x="55" y="92" font-size="8">_1_</text><text x="92" y="92" font-size="7.5">9</text>
<text x="15" y="115" font-size="6.3" font-style="italic">Roadside</text>
<text x="16" y="126" font-size="7" font-style="italic">Jakob &amp; Ryan</text>
<text x="14" y="136.5" font-size="6.3" font-style="italic">Thomas   Tougher</text>
</g>
<rect x="24" y="94" width="76.5" height="12" fill="#3a2c2c"/>
<text x="27" y="104.5" font-family="Liberation Mono" font-size="11" font-weight="700" fill="#f24a58" letter-spacing="-0.45">16.21.34.21</text>
<!-- upper hand -->
<path d="M100 47.5 Q104 43 112 41.5 Q120 40.5 126 43 L137 45 V72 L130 70 Q122 68 118 64 L112 60 Q107 57 104 53 Z" fill="#cc9a80"/>
<path d="M100 47.5 Q104 43 112 41.5 Q116 41 118 43 Q110 45 105 50 Z" fill="#dcae94"/>
<path d="M108 53 Q116 50 124 56 L121 62 Q114 60 108 57 Z" fill="#b5846c"/>
<path d="M118 62 L125 61 L133 86 L127 88 Z" fill="#1f1e1e"/>
<path d="M120 68 L124 67 L128 78 L124 79 Z" fill="#e8e8e8"/>
<path d="M130 60 L137 58 V92 L132 90 Z" fill="#2a2726"/>
<!-- lower hand -->
<path d="M65.3 142.8 L74.8 138.7 L93.6 135.3 L104.4 138.7 L115.2 146.8 L120.6 153.5 L115.2 164.3 L104.4 161.6 L90.9 153.5 L74.8 146.8 Z" fill="#d6ad93"/>
<path d="M64.5 141.5 Q67 140 69 142 L68 146 Q65 146 64.5 144 Z" fill="#d85a50"/>
<path d="M106 147 L120 146 L127 162 L114 172 L107 166 Z" fill="#6d4a2a"/>
<path d="M108 150 L118 149 L123 161 L114 168 Z" fill="#b78852"/>
<path d="M118 153 L137 148 V182 H122 Z" fill="#2b2a2c"/>
</svg></div>
<div class="card" id="card3" style="left:711px"><svg viewBox="0 0 137 182" preserveAspectRatio="xMidYMid slice">
<rect width="137" height="182" fill="#40192f"/>
<!-- top bar -->
<rect width="137" height="9" fill="#3e1a2a"/>
<rect width="137" height="1.5" fill="#b86a78"/>
<circle cx="12.8" cy="3.5" r="1.8" fill="#ffe0e0"/><circle cx="70.8" cy="3.5" r="1.8" fill="#ffe0e0"/><circle cx="128" cy="3.5" r="1.8" fill="#ffe0e0"/>
<!-- marquee -->
<rect x="4.5" y="8.8" width="133" height="15.5" fill="#f2d3dc"/>
<g stroke="#dcaab8" stroke-width="0.7"><line x1="4.5" y1="11.5" x2="137" y2="11.5"/><line x1="4.5" y1="21.5" x2="137" y2="21.5"/></g>
<line x1="82" y1="8.8" x2="82" y2="24.3" stroke="#c89aa8" stroke-width="0.5"/>
<text x="71" y="20.3" text-anchor="middle" font-family="Liberation Sans" font-size="11" letter-spacing="2.6" fill="#33242c">CINEMA</text>
<rect x="0" y="24.3" width="137" height="6" fill="#3a1626"/>
<!-- left tiled wall -->
<rect x="0" y="26" width="19.5" height="113" fill="#e87aa6"/>
<rect x="2" y="30" width="15" height="100" fill="#f4a6c4"/>
<g stroke="#fbd0de" stroke-width="0.35" opacity="0.9">
<line x1="5" y1="26" x2="5" y2="139"/><line x1="9" y1="26" x2="9" y2="139"/><line x1="13" y1="26" x2="13" y2="139"/><line x1="17" y1="26" x2="17" y2="139"/>
</g>
<rect x="0" y="112" width="19.5" height="27" fill="#b84a74" opacity="0.6"/>
<!-- overhang -->
<path d="M19.5 26 H66 V37 H26 Z" fill="#4a1f35"/>
<rect x="24" y="29" width="36" height="5" fill="#9a3a62"/>
<!-- window area -->
<rect x="19.5" y="34" width="117.5" height="95" fill="#2a1020"/>
<rect x="21.5" y="37" width="19.5" height="19" fill="#f0468e"/>
<rect x="49.5" y="37" width="15" height="19" fill="#ead2c8"/><rect x="41" y="37" width="8.5" height="19" fill="#3c1a2c"/>
<rect x="21.5" y="58" width="19.5" height="22.5" fill="#ea3a86"/>
<rect x="49.5" y="58" width="15" height="22.5" fill="#e4c9c2"/><rect x="41" y="58" width="8.5" height="22.5" fill="#3c1a2c"/>
<rect x="21.5" y="82.5" width="19.5" height="20.5" fill="#dc2f7a"/>
<rect x="49.5" y="82.5" width="15" height="20.5" fill="#cfa6ae"/><rect x="41" y="82.5" width="8.5" height="20.5" fill="#4a1a34"/>
<rect x="21.5" y="105" width="43" height="23" fill="#d42c76"/>
<rect x="66.5" y="34" width="49" height="21.5" fill="#e0508e"/>
<rect x="66.5" y="30" width="70.5" height="6" fill="#5a2038"/>
<rect x="66.5" y="58" width="49" height="22.5" fill="#d83c80"/>
<rect x="66.5" y="82.5" width="49" height="20.5" fill="#cc3a78"/>
<rect x="66.5" y="105" width="49" height="23" fill="#b85a80"/>
<rect x="117.5" y="34" width="19.5" height="21.5" fill="#e63c82"/>
<rect x="117.5" y="58" width="19.5" height="22.5" fill="#de3a7e"/>
<rect x="117.5" y="82.5" width="19.5" height="20.5" fill="#d43e7c"/>
<rect x="117.5" y="105" width="19.5" height="23" fill="#b85e84"/>
<!-- stairs -->
<path d="M79 44 L87 40 L83 95 L76 108 Z" fill="#3a1525"/>
<g stroke="#ff9ab8" stroke-width="0.6" opacity="0.6"><line x1="87" y1="62" x2="115" y2="62"/><line x1="86" y1="67" x2="115" y2="67"/><line x1="85" y1="72" x2="115" y2="72"/><line x1="84" y1="77" x2="115" y2="77"/><line x1="84" y1="88" x2="115" y2="88"/><line x1="83" y1="94" x2="115" y2="94"/></g>
<!-- neon -->
<text x="104" y="54" font-family="Liberation Sans" font-size="15" fill="none" stroke="#ffb09a" stroke-width="1.1">CEN</text>
<text x="104" y="75" font-family="Liberation Sans" font-size="15" fill="none" stroke="#ffb09a" stroke-width="1.1">CIN</text>
<!-- mullions -->
<g fill="#2a1222">
<rect x="19.5" y="30" width="2.6" height="100"/>
<rect x="47" y="34" width="1.2" height="70"/>
<rect x="64.6" y="30" width="2.2" height="100"/>
<rect x="115.5" y="30" width="2" height="100"/>
<rect x="19.5" y="55.6" width="117.5" height="2.2"/>
<rect x="19.5" y="80.5" width="117.5" height="2.2"/>
<rect x="19.5" y="103" width="117.5" height="2.2"/>
<rect x="19.5" y="127.5" width="117.5" height="2.5"/>
</g>
<!-- person -->
<path d="M86 92 Q94 86 100 94 L104 108 L84 108 Z" fill="#e8607e"/>
<circle cx="93" cy="89" r="4.2" fill="#3a1a24"/>
<path d="M82 111 Q93 103 106 109 L108 128 H80 Z" fill="#4a4446"/>
<!-- lower wall -->
<rect x="19.5" y="130" width="117.5" height="22" fill="#3f1c36"/>
<rect x="0" y="139" width="19.5" height="13" fill="#35152c"/>
<rect x="0" y="151" width="137" height="6" fill="#53334a"/>
<!-- floor -->
<rect x="0" y="157" width="137" height="25" fill="#3a2232"/>
<g fill="#e889a5">
<path d="M-4 160 L6 158 L12 160 L2 162 Z"/><path d="M14 160 L24 158 L30 160 L20 162 Z"/><path d="M32 160 L42 158 L48 160 L38 162 Z"/><path d="M50 160 L60 158 L66 160 L56 162 Z"/><path d="M68 160 L78 158 L84 160 L74 162 Z"/><path d="M86 160 L96 158 L102 160 L92 162 Z"/><path d="M104 160 L114 158 L120 160 L110 162 Z"/><path d="M122 160 L132 158 L138 160 L128 162 Z"/>
<path d="M5 165.5 L15 163.5 L21 165.5 L11 167.5 Z"/><path d="M23 165.5 L33 163.5 L39 165.5 L29 167.5 Z"/><path d="M41 165.5 L51 163.5 L57 165.5 L47 167.5 Z"/><path d="M59 165.5 L69 163.5 L75 165.5 L65 167.5 Z"/><path d="M77 165.5 L87 163.5 L93 165.5 L83 167.5 Z"/><path d="M95 165.5 L105 163.5 L111 165.5 L101 167.5 Z"/><path d="M113 165.5 L123 163.5 L129 165.5 L119 167.5 Z"/><path d="M131 165.5 L141 163.5 L147 165.5 L137 167.5 Z"/>
<path d="M-4 171 L6 169 L12 171 L2 173 Z"/><path d="M14 171 L24 169 L30 171 L20 173 Z"/><path d="M32 171 L42 169 L48 171 L38 173 Z"/><path d="M50 171 L60 169 L66 171 L56 173 Z"/><path d="M68 171 L78 169 L84 171 L74 173 Z"/><path d="M86 171 L96 169 L102 171 L92 173 Z"/><path d="M104 171 L114 169 L120 171 L110 173 Z"/><path d="M122 171 L132 169 L138 171 L128 173 Z"/>
<path d="M5 176.5 L15 174.5 L21 176.5 L11 178.5 Z"/><path d="M23 176.5 L33 174.5 L39 176.5 L29 178.5 Z"/><path d="M41 176.5 L51 174.5 L57 176.5 L47 178.5 Z"/><path d="M59 176.5 L69 174.5 L75 176.5 L65 178.5 Z"/><path d="M77 176.5 L87 174.5 L93 176.5 L83 178.5 Z"/><path d="M95 176.5 L105 174.5 L111 176.5 L101 178.5 Z"/><path d="M113 176.5 L123 174.5 L129 176.5 L119 178.5 Z"/><path d="M131 176.5 L141 174.5 L147 176.5 L137 178.5 Z"/>
<path d="M-4 182 L6 180 L12 182 L2 184 Z"/><path d="M14 182 L24 180 L30 182 L20 184 Z"/><path d="M32 182 L42 180 L48 182 L38 184 Z"/><path d="M50 182 L60 180 L66 182 L56 184 Z"/><path d="M68 182 L78 180 L84 182 L74 184 Z"/><path d="M86 182 L96 180 L102 182 L92 184 Z"/><path d="M104 182 L114 180 L120 182 L110 184 Z"/><path d="M122 182 L132 180 L138 182 L128 184 Z"/>
</g>
<!-- right chair -->
<path d="M131 112 L137 110 V155 L134 155 Z" fill="#d9a070" opacity="0.6"/>
</svg></div>

<div class="a ttl" style="left:425px;top:376.5px">Inception</div>
<div class="a yr" style="left:425px;top:390.5px">2010</div>
<div class="a rt" style="left:435.5px;top:403px">8.8</div>
<div class="a cm" style="left:533.5px;top:403px">124</div>

<div class="a ttl" style="left:572px;top:376.5px">The Dark Knight</div>
<div class="a yr" style="left:572px;top:390.5px">2008</div>
<div class="a rt" style="left:582.5px;top:403px">9</div>
<div class="a cm" style="left:680.5px;top:403px">231</div>

<div class="a ttl" style="left:719px;top:376.5px">Interstellar</div>
<div class="a yr" style="left:719px;top:390.5px">2014</div>
<div class="a rt" style="left:729.5px;top:403px">8.6</div>
<div class="a cm" style="left:827.5px;top:403px">156</div>

<div class="a" style="left:424.3px;top:403px;width:8.6px;height:8.6px"><svg width="8.6" height="8.6" viewBox="0 0 24 24"><path d="M12 1.5 L15.1 8.1 L22.5 9 L17 14 L18.5 21.5 L12 17.8 L5.5 21.5 L7 14 L1.5 9 L8.9 8.1 Z" fill="#f5c211"/></svg></div>
<div class="a" style="left:522.8px;top:403.5px;width:8px;height:8px"><svg width="8" height="8" viewBox="0 0 24 24"><path d="M7.9 20 A9 9 0 1 0 4 16.1 L2 22 Z" fill="none" stroke="#94a3b8" stroke-width="2.2" stroke-linejoin="round"/></svg></div>
<div class="a" style="left:571.3px;top:403px;width:8.6px;height:8.6px"><svg width="8.6" height="8.6" viewBox="0 0 24 24"><path d="M12 1.5 L15.1 8.1 L22.5 9 L17 14 L18.5 21.5 L12 17.8 L5.5 21.5 L7 14 L1.5 9 L8.9 8.1 Z" fill="#f5c211"/></svg></div>
<div class="a" style="left:669.8px;top:403.5px;width:8px;height:8px"><svg width="8" height="8" viewBox="0 0 24 24"><path d="M7.9 20 A9 9 0 1 0 4 16.1 L2 22 Z" fill="none" stroke="#94a3b8" stroke-width="2.2" stroke-linejoin="round"/></svg></div>
<div class="a" style="left:718.3px;top:403px;width:8.6px;height:8.6px"><svg width="8.6" height="8.6" viewBox="0 0 24 24"><path d="M12 1.5 L15.1 8.1 L22.5 9 L17 14 L18.5 21.5 L12 17.8 L5.5 21.5 L7 14 L1.5 9 L8.9 8.1 Z" fill="#f5c211"/></svg></div>
<div class="a" style="left:816.8px;top:403.5px;width:8px;height:8px"><svg width="8" height="8" viewBox="0 0 24 24"><path d="M7.9 20 A9 9 0 1 0 4 16.1 L2 22 Z" fill="none" stroke="#94a3b8" stroke-width="2.2" stroke-linejoin="round"/></svg></div>
</body></html>
